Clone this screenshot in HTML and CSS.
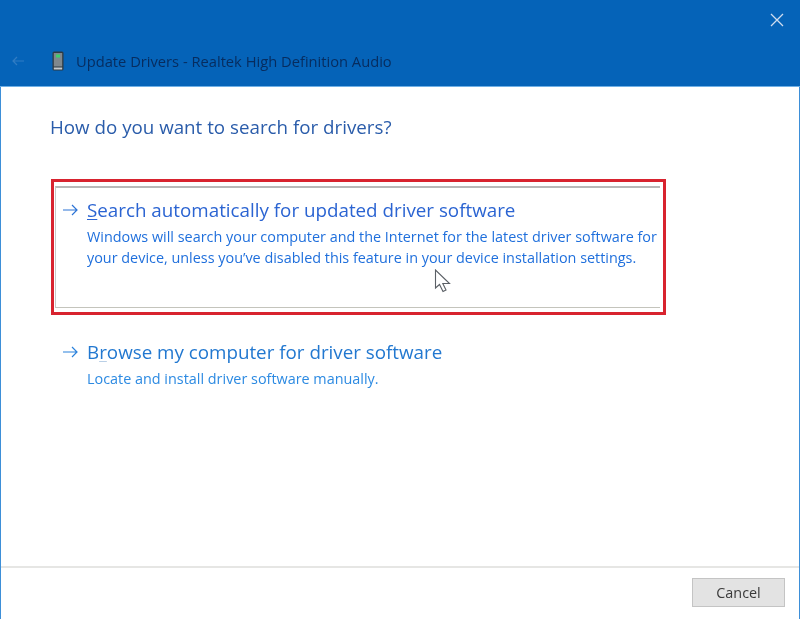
FILE: index.html
```html
<!DOCTYPE html>
<html lang="en">
<head>
<meta charset="utf-8">
<title>Update Drivers</title>
<link rel="stylesheet" href="styles.css">
</head>
<body>
<div class="window">
  <header class="header">
    <div class="close-row">
      <svg class="close" width="16" height="16" viewBox="0 0 16 16"><path d="M2 2 L14 14 M14 2 L2 14" stroke="#cfdcef" stroke-width="1.3" fill="none"/></svg>
    </div>
    <div class="title-row">
      <svg class="back" width="14" height="10" viewBox="0 0 14 10"><path d="M13 5 H2 M6 1 L2 5 L6 9" stroke="#4f8dcb" stroke-width="1.2" fill="none"/></svg>
      <svg class="device" width="12" height="20" viewBox="0 0 12 20">
        <rect x="0.5" y="0.5" width="11" height="19" rx="1.5" fill="#2f3a42"/>
        <rect x="1.8" y="2" width="8.4" height="13.5" fill="#7f888d"/>
        <rect x="4" y="3.5" width="4" height="3" fill="#3fd06a"/>
        <rect x="1.8" y="16.5" width="8.4" height="2" fill="#c4c9cc"/>
      </svg>
      <span class="title">Update Drivers - Realtek High Definition Audio</span>
    </div>
  </header>
  <main class="main">
    <h1 class="heading">How do you want to search for drivers?</h1>
    <div class="highlight">
      <div class="option option-selected">
        <svg class="arrow" width="16" height="12" viewBox="0 0 16 12"><path d="M1 6 H15 M10 1 L15 6 L10 11" stroke="#2d74d6" stroke-width="1.2" fill="none"/></svg>
        <div class="option-text">
          <div class="option-title"><span class="key">S</span>earch automatically for updated driver software</div>
          <div class="option-desc">Windows will search your computer and the Internet for the latest driver software for<br>your device, unless you’ve disabled this feature in your device installation settings.</div>
        </div>
        <svg class="cursor" width="18" height="24" viewBox="0 0 18 24"><path d="M1.5 1 V19 L5.5 15.5 L9 22.5 L12 21 L8.8 14.5 L15.5 14.5 Z" fill="#fff" stroke="#5b6066" stroke-width="1.1"/></svg>
      </div>
    </div>
    <div class="option option-plain">
      <svg class="arrow" width="16" height="12" viewBox="0 0 16 12"><path d="M1 6 H15 M10 1 L15 6 L10 11" stroke="#2a82dc" stroke-width="1.2" fill="none"/></svg>
      <div class="option-text">
        <div class="option-title plain-title">B<span class="key key-faint">r</span>owse my computer for driver software</div>
        <div class="option-desc plain-desc">Locate and install driver software manually.</div>
      </div>
    </div>
  </main>
  <footer class="footer">
    <button class="cancel" type="button">Cancel</button>
  </footer>
</div>
</body>
</html>
```
FILE: styles.css
```css
* { box-sizing: border-box; }
html, body { margin: 0; padding: 0; }
body { width: 800px; height: 619px; overflow: hidden; background: #fff; font-family: "Open Sans", "Noto Sans", sans-serif; }
.window { width: 800px; height: 619px; display: flex; flex-direction: column; border-left: 1px solid #3d8fd8; border-right: 1px solid #3d8fd8; filter: blur(0.35px); }
.header { height: 87px; margin: 0 -1px; background: #0563b8; border-bottom: 1px solid #6fb0e6; display: flex; flex-direction: column; }
.close-row { height: 46px; padding: 12px 15px 0 0; display: flex; justify-content: flex-end; align-items: flex-start; }
.title-row { display: flex; align-items: center; height: 30px; padding-left: 11px; }
.back { margin-right: 27px; opacity: .6; }
.device { margin-right: 12px; }
.title { font-size: 14.7px; color: #072c5e; white-space: nowrap; }
.main { flex: 1; padding: 0 0 0 49px; display: flex; flex-direction: column; }
.heading { margin: 26px 0 0; font-size: 18.75px; line-height: 28px; font-weight: 400; color: #2a5caa; }
.highlight { margin: 38px 0 0 1px; width: 615px; height: 136px; border: 3px solid #d8232f; padding: 4px 3px 4px 1px; display: flex; }
.option { position: relative; display: flex; }
.option-selected { flex: 1; border-top: 2px solid #b8b8b8; border-bottom: 1px solid #c4c4bc; border-left: 1px solid #c8c8c8; padding: 9px 0 0 6px; }
.option-plain { margin-top: 24px; padding-left: 12px; }
.arrow { flex: none; margin: 7px 9px 0 0; }
.option-title { font-size: 18.8px; line-height: 26px; color: #2b64d2; white-space: nowrap; }
.plain-title { color: #2278d0; }
.key { text-decoration: underline; text-decoration-thickness: 1px; text-underline-offset: 2px; }
.key-faint { text-decoration-color: #b9cfe6; }
.option-desc { margin-top: 4px; font-size: 14.4px; line-height: 20.5px; color: #1f6fdc; white-space: nowrap; }
.plain-desc { margin-top: 4px; color: #2c8ae2; }
.cursor { position: absolute; left: 378px; top: 81px; }
.footer { height: 53px; border-top: 2px solid #e6e6e4; padding: 10px 14px 0 0; display: flex; justify-content: flex-end; align-items: flex-start; }
.cancel { width: 93px; height: 29px; background: #e3e3e3; border: 1px solid #c4c4c4; font: inherit; font-size: 14.4px; color: #3a3a3a; padding: 0; }
```
